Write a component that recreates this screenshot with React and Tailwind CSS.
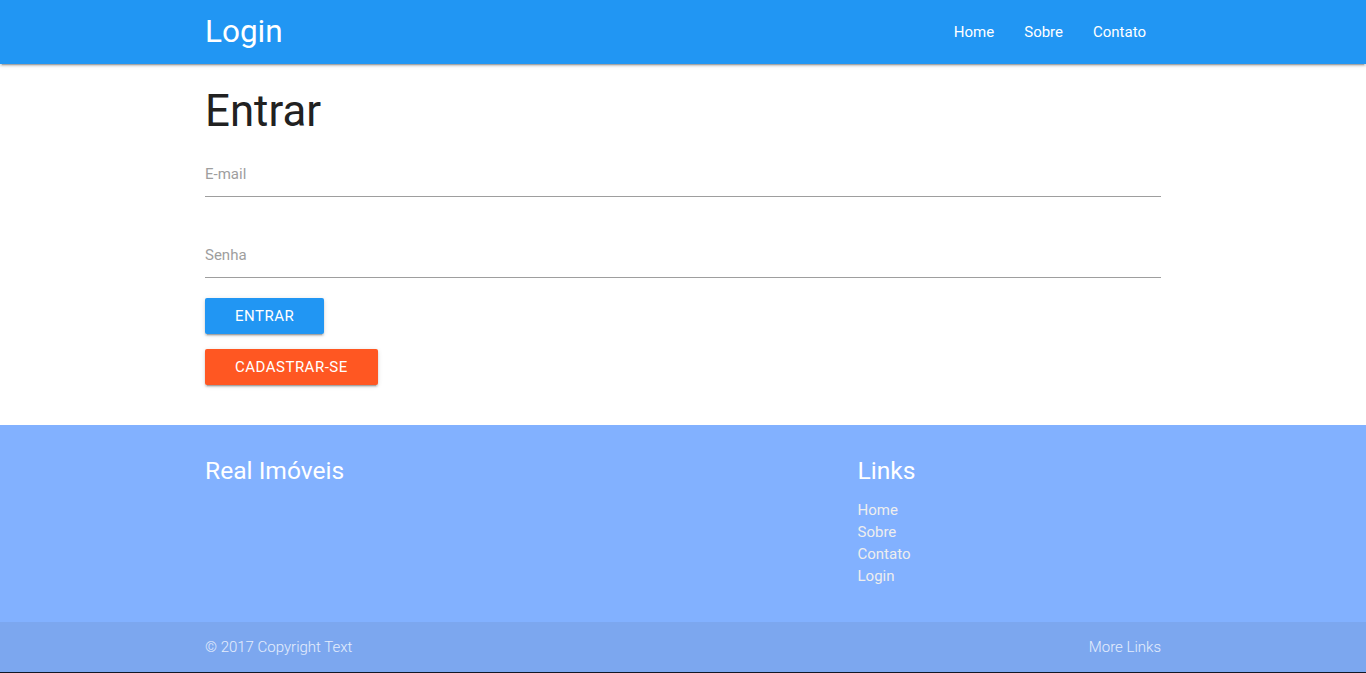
import React, { useState } from "react";

const navLinks = ["Home", "Sobre", "Contato"];
const footerLinks = ["Home", "Sobre", "Contato", "Login"];

const btnShadow =
  "shadow-[0_2px_2px_0_rgba(0,0,0,0.14),0_1px_5px_0_rgba(0,0,0,0.12),0_3px_1px_-2px_rgba(0,0,0,0.2)]";

const App = () => {
  const [email, setEmail] = useState("");
  const [senha, setSenha] = useState("");

  return (
    <div className="min-h-screen bg-white font-['Roboto',sans-serif] text-[15px] leading-[22.5px]">
      {/* Navbar */}
      <nav className="relative z-10 h-16 bg-[#2196f3] shadow-[0_2px_2px_0_rgba(0,0,0,0.14),0_1px_5px_0_rgba(0,0,0,0.12),0_3px_1px_-2px_rgba(0,0,0,0.2)]">
        <div className="mx-auto flex h-16 w-[956px] items-center justify-between">
          <a href="#" className="text-[31.5px] leading-[64px] text-white">
            Login
          </a>
          <ul className="flex">
            {navLinks.map((l) => (
              <li key={l}>
                <a href="#" className="block px-[15px] text-[15px] leading-[64px] text-white">
                  {l}
                </a>
              </li>
            ))}
          </ul>
        </div>
      </nav>

      {/* Main */}
      <main className="mx-auto w-[956px] pb-10">
        <h3 className="mt-[23px] text-[43.8px] leading-[48px] text-[#212121]">Entrar</h3>

        <form className="mt-[16px]">
          <input
            type="email"
            placeholder="E-mail"
            value={email}
            onChange={(e) => setEmail(e.target.value)}
            className="block h-[46px] w-full border-b border-[#9e9e9e] bg-transparent pt-[1px] text-[15px] text-[#212121] outline-none placeholder:text-[#9e9e9e]"
          />
          <input
            type="password"
            placeholder="Senha"
            value={senha}
            onChange={(e) => setSenha(e.target.value)}
            className="mt-[35px] block h-[46px] w-full border-b border-[#9e9e9e] bg-transparent pt-[1px] text-[15px] text-[#212121] outline-none placeholder:text-[#9e9e9e]"
          />

          <div className="mt-5 flex flex-col items-start gap-[15px]">
            <button
              type="submit"
              className={`h-9 rounded-[2px] bg-[#2196f3] px-[30px] text-[15px] uppercase leading-9 tracking-[0.5px] text-white ${btnShadow}`}
            >
              Entrar
            </button>
            <button
              type="button"
              className={`h-9 rounded-[2px] bg-[#ff5722] px-[30px] text-[15px] uppercase leading-9 tracking-[0.5px] text-white ${btnShadow}`}
            >
              Cadastrar-se
            </button>
          </div>
        </form>
      </main>

      {/* Footer */}
      <footer className="bg-[#82b1ff]">
        <div className="mx-auto flex h-[197px] w-[956px] pt-[32px]">
          <div className="w-[652.5px]">
            <h5 className="text-[24.6px] leading-[27px] text-white">Real Imóveis</h5>
          </div>
          <div>
            <h5 className="text-[24.6px] leading-[27px] text-white">Links</h5>
            <ul className="mt-[15px]">
              {footerLinks.map((l) => (
                <li key={l} className="leading-[22px]">
                  <a href="#" className="text-[15px] text-[#eeeeee]">
                    {l}
                  </a>
                </li>
              ))}
            </ul>
          </div>
        </div>
        <div className="h-[50px] bg-[#7ca7ef]">
          <div className="mx-auto flex h-[50px] w-[956px] items-center justify-between text-[15px] font-light text-white/80">
            <span>© 2017 Copyright Text</span>
            <a href="#" className="text-white/80">
              More Links
            </a>
          </div>
        </div>
        <div className="h-px bg-[#111827]" />
      </footer>
    </div>
  );
};

export default App;
